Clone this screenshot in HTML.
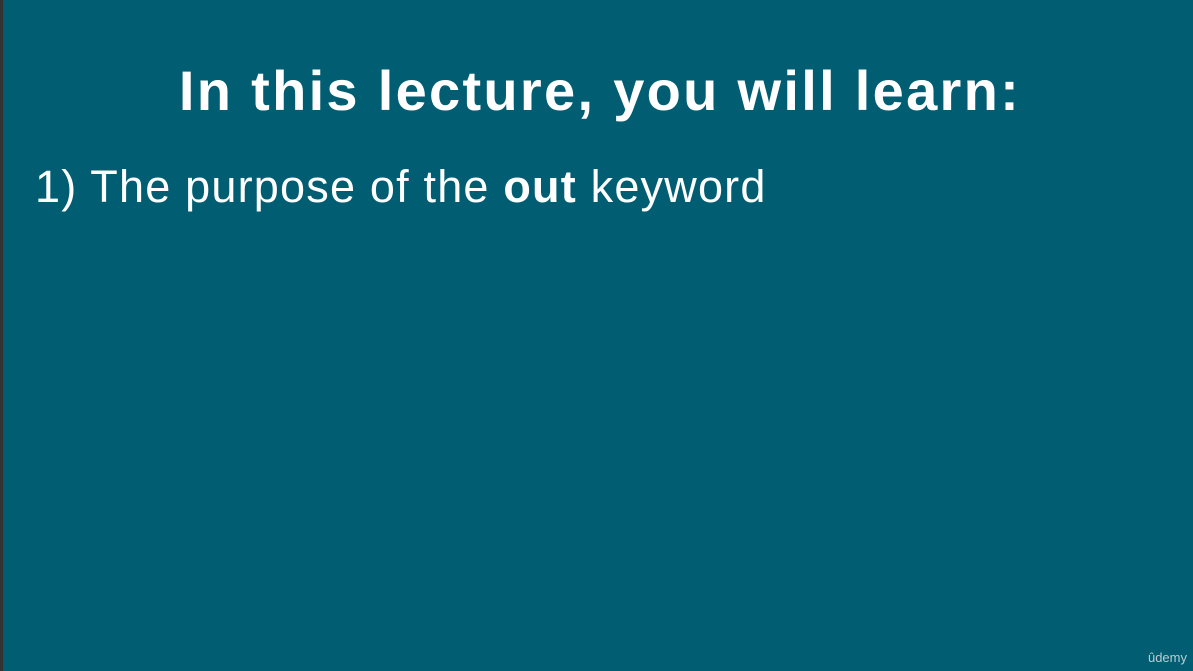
<!DOCTYPE html>
<html><head><style>
html,body{margin:0;padding:0;}
body{width:1193px;height:671px;background:#015e72;position:relative;overflow:hidden;font-family:"Liberation Sans",sans-serif;color:#fff;}
.strip{position:absolute;left:0;top:0;width:3px;height:671px;background:#333;}
h1{position:absolute;left:0;width:1200px;top:58px;margin:0;text-align:center;font-size:56px;font-weight:bold;letter-spacing:2.3px;line-height:66px;white-space:nowrap;}
p{position:absolute;left:35px;top:160px;margin:0;font-size:45px;line-height:54px;letter-spacing:1.2px;white-space:nowrap;}
.logo{position:absolute;right:6px;bottom:6px;font-size:13px;color:#b9cdd2;}
</style></head><body>
<div class="strip"></div>
<h1>In this lecture, you will learn:</h1>
<p>1) The purpose of the <b>out</b> keyword</p>
<div class="logo">ûdemy</div>
</body></html>
